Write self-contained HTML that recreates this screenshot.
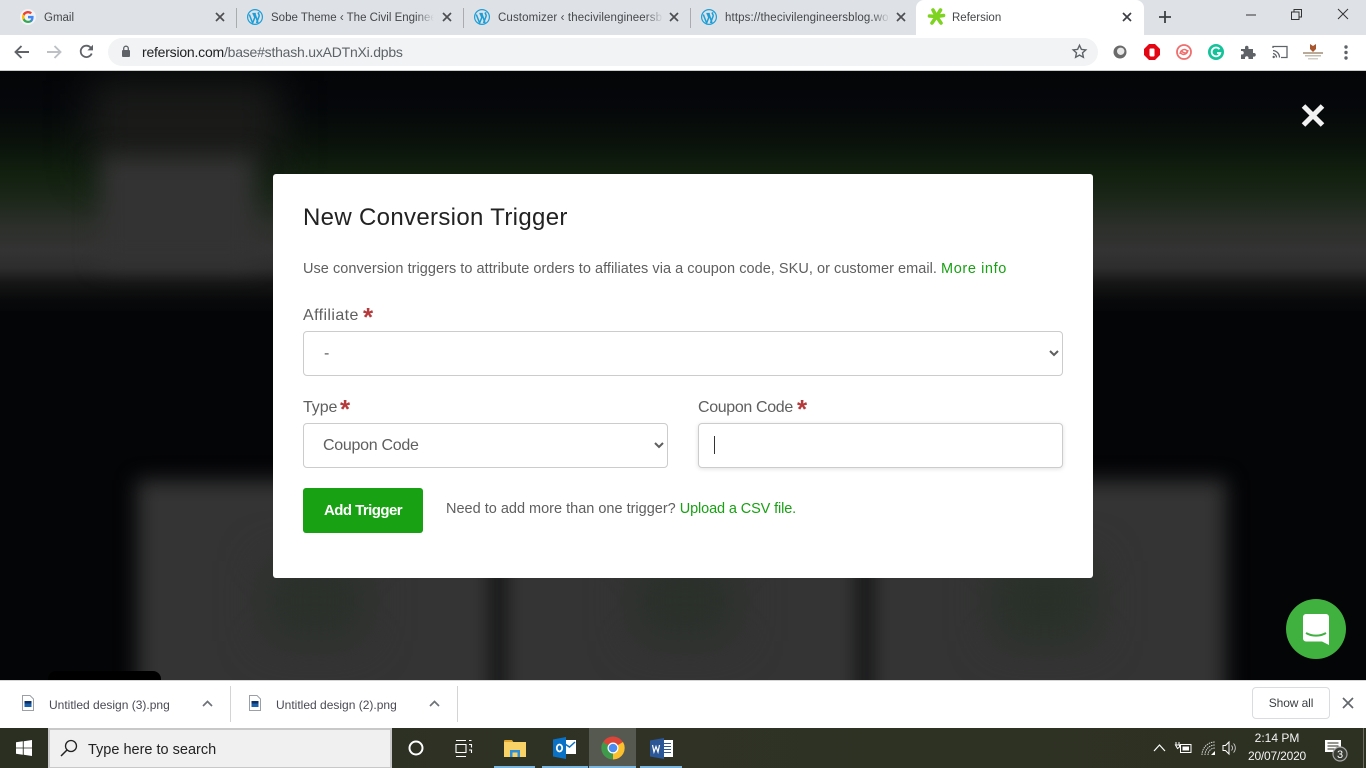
<!DOCTYPE html>
<html>
<head>
<meta charset="utf-8">
<title>Refersion</title>
<style>
html,body{margin:0;padding:0;width:1366px;height:768px;overflow:hidden;background:#040507;font-family:"Liberation Sans",sans-serif}
.a{position:absolute}
svg{position:absolute;display:block;overflow:visible}
.tab-t{position:absolute;top:11px;height:15px;font-size:11.5px;line-height:15px;color:#45474a;white-space:nowrap;overflow:hidden}
.fade:after{content:"";position:absolute;right:0;top:0;width:18px;height:15px;background:linear-gradient(90deg,rgba(222,225,230,0),#dee1e6)}
.sep{position:absolute;top:8px;width:1px;height:20px;background:#a9abae}
.lbl{position:absolute;font-size:16px;line-height:20px;color:#5f5f5f;white-space:nowrap}
.st{position:absolute;font-size:26px;line-height:20px;color:#b53a3c;font-weight:bold}
select,input{position:absolute;box-sizing:border-box;background:#fff;border:1px solid #ccc;border-radius:4px;font-family:"Liberation Sans",sans-serif;font-size:16px;color:#5f5f5f;outline:none;margin:0}
.dl{position:absolute;top:698px;font-size:12px;line-height:14px;color:#4a4a55;white-space:nowrap}
.ul{position:absolute;top:766px;height:2px;background:#7cb5de}
</style>
</head>
<body>

<!-- blurred page background -->
<div class="a" style="left:0;top:71px;width:1366px;height:609px;overflow:hidden;background:#040507">
  <div class="a" style="left:0;top:0;width:1366px;height:240px;background:linear-gradient(180deg,#040507 0,#05070a 35px,#0a120b 72px,#11200f 102px,#1a2618 125px,#2c2f2a 155px,#333 180px,#2d2d2d 197px,#161616 212px,#08090a 230px,#040507 250px)"></div>
  <div class="a" style="left:90px;top:10px;width:190px;height:90px;background:#1a1b19;filter:blur(20px)"></div>
  <div class="a" style="left:100px;top:84px;width:155px;height:110px;background:#333;filter:blur(12px)"></div>
  <div class="a" style="left:137px;top:409px;width:357px;height:260px;background:#343434;filter:blur(10px)"></div>
  <div class="a" style="left:502px;top:409px;width:359px;height:260px;background:#343434;filter:blur(10px)"></div>
  <div class="a" style="left:869px;top:409px;width:357px;height:260px;background:#343434;filter:blur(10px)"></div>
  <div class="a" style="left:265px;top:490px;width:100px;height:80px;background:#2a302a;filter:blur(22px)"></div>
  <div class="a" style="left:635px;top:490px;width:100px;height:80px;background:#2a302a;filter:blur(22px)"></div>
  <div class="a" style="left:995px;top:490px;width:100px;height:80px;background:#283028;filter:blur(22px)"></div>
  <div class="a" style="left:48px;top:600px;width:113px;height:20px;background:#000;border-radius:8px 8px 0 0"></div>
</div>

<!-- Chrome tab strip -->
<div class="a" style="left:0;top:0;width:1366px;height:35px;background:#dee1e6"></div>
<div class="a" style="left:916px;top:0;width:228px;height:35px;background:#fff;border-radius:8px 8px 0 0"></div>

<svg style="left:20px;top:9px" width="16" height="16" viewBox="0 0 16 16">
  <circle cx="8" cy="8" r="8" fill="#fff" opacity=".6"/>
  <path d="M13.6 8.2c0-.5 0-.9-.1-1.3H8v2.5h3.2c-.2.8-.6 1.4-1.2 1.8v1.5h1.9c1.1-1 1.7-2.6 1.7-4.5z" fill="#4285f4"/>
  <path d="M8 14c1.6 0 2.9-.5 3.9-1.4L10 11.2c-.5.4-1.2.6-2 .6-1.5 0-2.9-1-3.3-2.4H2.700v1.500C3.700 12.800 5.700 14 8 14z" fill="#34a853"/>
  <path d="M4.700 9.400c-.3-.8-.3-1.900 0-2.800V5.100H2.700c-.9 1.700-.9 4 0 5.800z" fill="#fbbc05"/>
  <path d="M8 4.400c.9 0 1.700.3 2.300.9l1.700-1.700C11 2.600 9.600 2 8 2 5.700 2 3.700 3.200 2.700 5.100l2 1.500C5.100 5.300 6.500 4.400 8 4.400z" fill="#ea4335"/>
</svg>
<div class="tab-t" style="left:44px;width:120px">Gmail</div>
<svg style="left:215px;top:12px" width="10" height="10" viewBox="0 0 10 10"><path d="M1 1l8 8M9 1l-8 8" stroke="#4c4e52" stroke-width="1.700"/></svg>
<div class="sep" style="left:236px"></div>

<svg style="left:247px;top:9px" width="16" height="16" viewBox="0 0 16 16"><circle cx="8" cy="8" r="7.400" fill="none" stroke="#1c9fd8" stroke-width="1.200"/><path d="M2.300 5.500L5.600 14 7.800 8.500 6.400 4.700M5.400 4.600h3.400M9.500 14L12 7.500c.5-1.300 0-2-.5-2.700-.6-.8.100-1.100.8-.9M7.900 4.700L11 14" fill="none" stroke="#1c9fd8" stroke-width="1.500"/></svg>
<div class="tab-t fade" style="left:271px;width:163px">Sobe Theme ‹ The Civil Engineer's Blog</div>
<svg style="left:442px;top:12px" width="10" height="10" viewBox="0 0 10 10"><path d="M1 1l8 8M9 1l-8 8" stroke="#4c4e52" stroke-width="1.700"/></svg>
<div class="sep" style="left:463px"></div>

<svg style="left:474px;top:9px" width="16" height="16" viewBox="0 0 16 16"><circle cx="8" cy="8" r="7.400" fill="none" stroke="#1c9fd8" stroke-width="1.200"/><path d="M2.300 5.500L5.600 14 7.800 8.500 6.400 4.700M5.400 4.600h3.400M9.500 14L12 7.500c.5-1.300 0-2-.5-2.700-.6-.8.100-1.100.8-.9M7.900 4.700L11 14" fill="none" stroke="#1c9fd8" stroke-width="1.500"/></svg>
<div class="tab-t fade" style="left:498px;width:165px;letter-spacing:.12px">Customizer ‹ thecivilengineersblog</div>
<svg style="left:669px;top:12px" width="10" height="10" viewBox="0 0 10 10"><path d="M1 1l8 8M9 1l-8 8" stroke="#4c4e52" stroke-width="1.700"/></svg>
<div class="sep" style="left:690px"></div>

<svg style="left:701px;top:9px" width="16" height="16" viewBox="0 0 16 16"><circle cx="8" cy="8" r="7.400" fill="none" stroke="#1c9fd8" stroke-width="1.200"/><path d="M2.300 5.500L5.600 14 7.800 8.500 6.400 4.700M5.400 4.600h3.400M9.500 14L12 7.500c.5-1.300 0-2-.5-2.700-.6-.8.100-1.100.8-.9M7.900 4.700L11 14" fill="none" stroke="#1c9fd8" stroke-width="1.500"/></svg>
<div class="tab-t fade" style="left:725px;width:165px;letter-spacing:.12px">https://thecivilengineersblog.wordpress</div>
<svg style="left:896px;top:12px" width="10" height="10" viewBox="0 0 10 10"><path d="M1 1l8 8M9 1l-8 8" stroke="#4c4e52" stroke-width="1.700"/></svg>

<svg style="left:928px;top:8px" width="17" height="17" viewBox="0 0 17 17"><path d="M8.500 8.500L5 2M8.500 8.500L12.500 2M8.500 8.500L1.500 8M8.500 8.500L15.500 7.500M8.500 8.500L4 15M8.500 8.500L13 15" stroke="#7ed321" stroke-width="3.600" stroke-linecap="round"/></svg>
<div class="tab-t" style="left:952px;width:120px">Refersion</div>
<svg style="left:1122px;top:12px" width="10" height="10" viewBox="0 0 10 10"><path d="M1 1l8 8M9 1l-8 8" stroke="#3c3e42" stroke-width="1.700"/></svg>
<svg style="left:1159px;top:11px" width="12" height="12" viewBox="0 0 12 12"><path d="M6 0v12M0 6h12" stroke="#3c4043" stroke-width="1.800"/></svg>

<svg style="left:1246px;top:14px" width="10" height="2" viewBox="0 0 10 2"><path d="M0 1h10" stroke="#333" stroke-width="1"/></svg>
<svg style="left:1291px;top:9px" width="11" height="11" viewBox="0 0 11 11"><path d="M.5 3h7.500v7.500H.5zM3 3V.5h7.500V8H8" fill="none" stroke="#333"/></svg>
<svg style="left:1338px;top:9px" width="10" height="10" viewBox="0 0 10 10"><path d="M0 0l10 10M10 0L0 10" stroke="#333" stroke-width="1"/></svg>

<!-- toolbar -->
<div class="a" style="left:0;top:35px;width:1366px;height:35px;background:#fff"></div>
<div class="a" style="left:0;top:70px;width:1366px;height:1px;background:#ccc"></div>
<svg style="left:14px;top:45px" width="16" height="14" viewBox="0 0 16 14"><path d="M15 7H2M7.500 1L1.500 7l6 6" fill="none" stroke="#5f6368" stroke-width="1.900"/></svg>
<svg style="left:46px;top:45px" width="16" height="14" viewBox="0 0 16 14"><path d="M1 7h13M8.500 1l6 6-6 6" fill="none" stroke="#bdc1c6" stroke-width="1.900"/></svg>
<svg style="left:79px;top:44px" width="15" height="15" viewBox="0 0 15 15"><path d="M12.700 9.500A5.700 5.700 0 1 1 11.600 3.500L13 5" fill="none" stroke="#5f6368" stroke-width="1.800"/><path d="M14 .8V6.400H8.400z" fill="#5f6368"/></svg>
<div class="a" style="left:108px;top:38px;width:990px;height:28px;background:#f1f3f4;border-radius:14px"></div>
<svg style="left:121px;top:45px" width="10" height="13" viewBox="0 0 10 13"><rect x="1" y="5" width="8" height="7" rx="1" fill="#5f6368"/><path d="M2.700 5.500V3.500a2.300 2.300 0 0 1 4.600 0v2" fill="none" stroke="#5f6368" stroke-width="1.300"/></svg>
<div class="a" style="left:142px;top:44px;font-size:14px;line-height:16px;white-space:nowrap;color:#202124;letter-spacing:-.22px">refersion.com<span style="color:#5f6368">/base#sthash.uxADTnXi.dpbs</span></div>
<svg style="left:1072px;top:44px" width="15" height="15" viewBox="0 0 15 15"><path d="M7.500 1.300l1.900 4.100 4.400.5-3.300 3 .9 4.400-3.900-2.200-3.900 2.200.9-4.400-3.300-3 4.400-.5z" fill="none" stroke="#5f6368" stroke-width="1.400"/></svg>

<svg style="left:1113px;top:45px" width="14" height="14" viewBox="0 0 14 14"><circle cx="7" cy="7" r="6.500" fill="#6a6a6a"/><circle cx="7.700" cy="6.300" r="3.700" fill="#e8e8e8"/></svg>
<svg style="left:1144px;top:44px" width="16" height="16" viewBox="0 0 16 16"><path d="M5 0h6l5 5v6l-5 5H5l-5-5V5z" fill="#e30613"/><path d="M5.500 11.500V5.500a1 1 0 0 1 1-1h3a1 1 0 0 1 1 1v6a1 1 0 0 1-1 1h-3z" fill="#fff"/></svg>
<svg style="left:1176px;top:44px" width="16" height="16" viewBox="0 0 16 16"><circle cx="8" cy="8" r="7" fill="none" stroke="#ef6e6e" stroke-width="1.800"/><path d="M4 10C5 4 11 5 11 7.500S6 9 6 6.500M12 6c-1 6-7 5-7 2.500" fill="none" stroke="#ef6e6e" stroke-width="1.500"/></svg>
<svg style="left:1208px;top:44px" width="16" height="16" viewBox="0 0 16 16"><circle cx="8" cy="8" r="8" fill="#15c39a"/><path d="M11.500 5.200A4.400 4.400 0 1 0 12.300 9H9" fill="none" stroke="#fff" stroke-width="1.800"/></svg>
<svg style="left:1241px;top:45px" width="14" height="14" viewBox="0 0 14 14"><path d="M0 4h4V2.500a1.700 1.700 0 0 1 3.500 0V4H12v4h1a1.800 1.800 0 0 1 0 3.600h-1V14H7.500v-1a1.700 1.700 0 0 0-3.500 0v1H0V9.500h1a1.700 1.700 0 0 0 0-3.500H0z" fill="#5f6368"/></svg>
<svg style="left:1272px;top:45px" width="16" height="14" viewBox="0 0 16 14"><path d="M1 3V1.500h14v11H9M1 5.500a7 7 0 0 1 6.500 7M1 8.500a4 4 0 0 1 3.500 4" fill="none" stroke="#5f6368" stroke-width="1.300"/><circle cx="1.700" cy="12" r="1.200" fill="#5f6368"/></svg>
<svg style="left:1302px;top:43px" width="22" height="18" viewBox="0 0 22 18"><path d="M8 1l3 2 3-2v5l-3 3-3-3z" fill="#a8562e"/><rect x="1" y="9" width="20" height="2" fill="#b9a998"/><rect x="3" y="12" width="16" height="1.500" fill="#c4bdb2"/><rect x="6" y="15" width="10" height="1.500" fill="#d0ccc6"/></svg>
<svg style="left:1344px;top:45px" width="4" height="15" viewBox="0 0 4 15"><circle cx="2" cy="2" r="1.700" fill="#5f6368"/><circle cx="2" cy="7.500" r="1.700" fill="#5f6368"/><circle cx="2" cy="13" r="1.700" fill="#5f6368"/></svg>

<!-- overlay close -->
<svg style="left:1301px;top:103px" width="24" height="25" viewBox="0 0 24 25"><path d="M2.500 3L21.500 22M21.500 3L2.500 22" stroke="#f2f2f2" stroke-width="5"/></svg>

<!-- modal -->
<div class="a" style="left:273px;top:174px;width:820px;height:404px;background:#fff;border-radius:3px"></div>
<div class="a" style="left:303px;top:203px;font-size:24px;line-height:30px;color:#222;white-space:nowrap;letter-spacing:.33px">New Conversion Trigger</div>
<div class="a" style="left:303px;top:260px;font-size:14.500px;line-height:18px;color:#5f5f5f;white-space:nowrap;letter-spacing:.04px">Use conversion triggers to attribute orders to affiliates via a coupon code, SKU, or customer email. <span style="color:#19a114;letter-spacing:.6px">More info</span></div>

<div class="lbl" style="left:303px;top:306px;letter-spacing:.4px">Affiliate</div>
<div class="st" style="left:363px;top:307px">*</div>
<select style="left:303px;top:331px;width:760px;height:45px;padding:0 0 0 16px"><option>-</option></select>

<div class="lbl" style="left:303px;top:398px;letter-spacing:-.1px">Type</div>
<div class="st" style="left:340px;top:399px">*</div>
<select style="left:303px;top:423px;width:365px;height:45px;padding:0 0 0 15px;letter-spacing:-.28px"><option>Coupon Code</option></select>

<div class="lbl" style="left:698px;top:398px;letter-spacing:-.35px">Coupon Code</div>
<div class="st" style="left:797px;top:399px">*</div>
<input type="text" style="left:698px;top:423px;width:365px;height:45px;box-shadow:0 1px 5px rgba(0,0,0,.12)">
<div class="a" style="left:714px;top:436px;width:1px;height:18px;background:#333"></div>

<div class="a" style="left:303px;top:488px;width:120px;height:45px;background:#19a114;border-radius:3px;color:#fff;font-size:15px;font-weight:bold;line-height:45px;text-align:center;letter-spacing:-.55px">Add Trigger</div>
<div class="a" style="left:446px;top:500px;font-size:14.500px;line-height:18px;color:#5f5f5f;white-space:nowrap;letter-spacing:0">Need to add more than one trigger? <span style="color:#19a114;letter-spacing:-.12px">Upload a CSV file.</span></div>

<!-- chat bubble -->
<div class="a" style="left:1286px;top:599px;width:60px;height:60px;border-radius:50%;background:#40b03f"></div>
<svg style="left:1302px;top:613px" width="28" height="32" viewBox="0 0 28 32"><path d="M4 1h20a3 3 0 0 1 3 3v28l-7-3.500H4a3 3 0 0 1-3-3V4a3 3 0 0 1 3-3z" fill="#fff"/><path d="M4 20c6 3.500 14 3.500 20 0" fill="none" stroke="#40b03f" stroke-width="2"/></svg>

<!-- download bar -->
<div class="a" style="left:0;top:680px;width:1366px;height:48px;background:#fff;border-top:1px solid #d6d6d6;box-sizing:border-box"></div>
<svg style="left:22px;top:695px" width="12" height="16" viewBox="0 0 12 16"><path d="M.5.500h7.500l3.500 3.500v11.500H.5z" fill="#fff" stroke="#9aa0a6"/><rect x="2.500" y="6" width="7" height="6" fill="#1a5fa8"/><rect x="2.500" y="6" width="7" height="2.500" fill="#0b2f66"/></svg>
<div class="dl" style="left:49px">Untitled design (3).png</div>
<svg style="left:202px;top:700px" width="11" height="7" viewBox="0 0 11 7"><path d="M1 6l4.500-4.500L10 6" fill="none" stroke="#6f7377" stroke-width="1.700"/></svg>
<div class="a" style="left:230px;top:686px;width:1px;height:36px;background:#d4d4d4"></div>
<svg style="left:249px;top:695px" width="12" height="16" viewBox="0 0 12 16"><path d="M.5.500h7.500l3.500 3.500v11.500H.5z" fill="#fff" stroke="#9aa0a6"/><rect x="2.500" y="6" width="7" height="6" fill="#1a5fa8"/><rect x="2.500" y="6" width="7" height="2.500" fill="#0b2f66"/></svg>
<div class="dl" style="left:276px">Untitled design (2).png</div>
<svg style="left:429px;top:700px" width="11" height="7" viewBox="0 0 11 7"><path d="M1 6l4.500-4.500L10 6" fill="none" stroke="#6f7377" stroke-width="1.700"/></svg>
<div class="a" style="left:457px;top:686px;width:1px;height:36px;background:#d4d4d4"></div>
<div class="a" style="left:1252px;top:687px;width:78px;height:32px;box-sizing:border-box;border:1px solid #dadce0;border-radius:4px;font-size:12px;line-height:30px;text-align:center;color:#3c4043;letter-spacing:-.1px">Show all</div>
<svg style="left:1343px;top:698px" width="10" height="10" viewBox="0 0 10 10"><path d="M0 0l10 10M10 0L0 10" stroke="#63676b" stroke-width="1.700"/></svg>

<!-- taskbar -->
<div class="a" style="left:0;top:728px;width:1366px;height:40px;background:linear-gradient(90deg,#2a2f22 0,#2f3224 45%,#2d3122 100%)"></div>
<svg style="left:16px;top:740px" width="16" height="16" viewBox="0 0 16 16"><path d="M0 2.300L6.800 1.300V7.600H0zM7.700 1.200L16 0V7.600H7.700zM0 8.400H6.800V14.700L0 13.700zM7.700 8.400H16V16L7.700 14.800z" fill="#fff"/></svg>
<div class="a" style="left:48px;top:728px;width:344px;height:40px;box-sizing:border-box;background:#f0f0f0;border:2px solid #c8c8c8;border-bottom-width:1px"></div>
<svg style="left:60px;top:739px" width="18" height="18" viewBox="0 0 18 18"><circle cx="11" cy="7" r="5.500" fill="none" stroke="#222" stroke-width="1.300"/><path d="M7 11L1 17" stroke="#222" stroke-width="1.500"/></svg>
<div class="a" style="left:88px;top:741px;font-size:14.500px;line-height:18px;color:#222;white-space:nowrap">Type here to search</div>
<svg style="left:408px;top:740px" width="16" height="16" viewBox="0 0 16 16"><circle cx="8" cy="8" r="6.500" fill="none" stroke="#fff" stroke-width="2"/></svg>
<svg style="left:455px;top:740px" width="17" height="17" viewBox="0 0 17 17"><path d="M1 .5h10M1 16.500h10M1 4.500h10v8H1zM14 .5h2.500M14 4.500h2.500v3M14 10h2.500v3" fill="none" stroke="#fff" stroke-width="1.100"/></svg>
<svg style="left:504px;top:739px" width="22" height="19" viewBox="0 0 22 19"><path d="M0 2a1 1 0 0 1 1-1h7l2 3H0z" fill="#e0a82e"/><rect x="0" y="3" width="22" height="15" fill="#f8d266"/><rect x="6" y="11" width="10" height="7" fill="#2f8ed6"/><rect x="8.500" y="13.500" width="5" height="4.500" fill="#f8d266"/></svg>
<svg style="left:553px;top:737px" width="23" height="22" viewBox="0 0 23 22"><rect x="11" y="3" width="12" height="14" fill="#fff"/><path d="M12 7l4.500 3L22 5" fill="none" stroke="#0a72c6" stroke-width="1.500"/><path d="M0 2.500L13 0v22L0 19.500z" fill="#0a72c6"/><ellipse cx="6.500" cy="11" rx="2.700" ry="3.500" fill="none" stroke="#fff" stroke-width="1.800"/></svg>
<div class="a" style="left:589px;top:728px;width:47px;height:40px;background:#565950"></div>
<svg style="left:601px;top:736px" width="24" height="24" viewBox="0 0 24 24"><circle cx="12" cy="12" r="11.500" fill="#dc4437"/><path d="M12 12L22 6A11.500 11.500 0 0 1 12 23.500z" fill="#fbc02d"/><path d="M12 12L12 23.500A11.500 11.500 0 0 1 2 6z" fill="#3f9a4c"/><circle cx="12" cy="12" r="5.500" fill="#fff"/><circle cx="12" cy="12" r="4.300" fill="#4a8cf0"/></svg>
<svg style="left:650px;top:738px" width="24" height="21" viewBox="0 0 24 21"><rect x="8" y="2" width="15" height="17" fill="#fff"/><path d="M14 5.500h7M14 8.500h7M14 11.500h7M14 14.500h7" stroke="#2b5797" stroke-width="1"/><path d="M0 2.500L14 0v21L0 18.500z" fill="#2b5797"/><path d="M2.500 7l1.500 7 2-5.500 2 5.500L9.500 7" fill="none" stroke="#fff" stroke-width="1.200"/></svg>
<div class="ul" style="left:494px;width:41px"></div>
<div class="ul" style="left:542px;width:46px"></div>
<div class="ul" style="left:589px;width:47px"></div>
<div class="ul" style="left:640px;width:42px"></div>

<!-- tray -->
<svg style="left:1153px;top:744px" width="13" height="8" viewBox="0 0 13 8"><path d="M1 7l5.500-6L12 7" fill="none" stroke="#fff" stroke-width="1.200"/></svg>
<svg style="left:1175px;top:741px" width="17" height="13" viewBox="0 0 17 13"><rect x="5.500" y="3.500" width="10.500" height="8" fill="none" stroke="#fff"/><rect x="7.500" y="5.500" width="6.500" height="4" fill="#fff"/><path d="M1 1v3M4 1v3M.5 4h4v2l-2 1.500z" fill="none" stroke="#fff"/></svg>
<svg style="left:1201px;top:741px" width="15" height="15" viewBox="0 0 15 15"><path d="M1 14A13 13 0 0 1 14 1M4 14A10 10 0 0 1 14 4M7 14A7 7 0 0 1 14 7" fill="none" stroke="#dcdcdc" stroke-width="1" stroke-dasharray="1.500 .8"/><path d="M14 10v4h-4z" fill="#fff"/></svg>
<svg style="left:1222px;top:741px" width="16" height="14" viewBox="0 0 16 14"><path d="M1 4.500h2.500L7 1v12L3.500 9.500H1z" fill="none" stroke="#fff"/><path d="M9.500 4.500a3.500 3.500 0 0 1 0 5M11.500 2.500a6.500 6.500 0 0 1 0 9" fill="none" stroke="#d0d0d0" stroke-width=".9"/></svg>
<div class="a" style="left:1233px;top:730px;width:88px;text-align:center;font-size:12px;line-height:16px;color:#f4f4f4">2:14 PM</div>
<div class="a" style="left:1233px;top:748px;width:88px;text-align:center;font-size:12px;line-height:16px;color:#f4f4f4;letter-spacing:-.2px">20/07/2020</div>
<svg style="left:1325px;top:740px" width="22" height="24" viewBox="0 0 22 24"><path d="M0 0h16v12h-3v4l-4-4H0z" fill="#fff"/><path d="M2.500 3h11M2.500 6h11M2.500 9h7" stroke="#2d3122" stroke-width="1"/><circle cx="15" cy="14" r="7" fill="#3a3d33" stroke="#a8a8a8" stroke-width="1.200"/></svg>
<div class="a" style="left:1335px;top:748px;width:10px;text-align:center;font-size:11px;line-height:14px;color:#fff">3</div>
<div class="a" style="left:1363px;top:728px;width:1px;height:40px;background:#6a6c62"></div>

</body>
</html>
